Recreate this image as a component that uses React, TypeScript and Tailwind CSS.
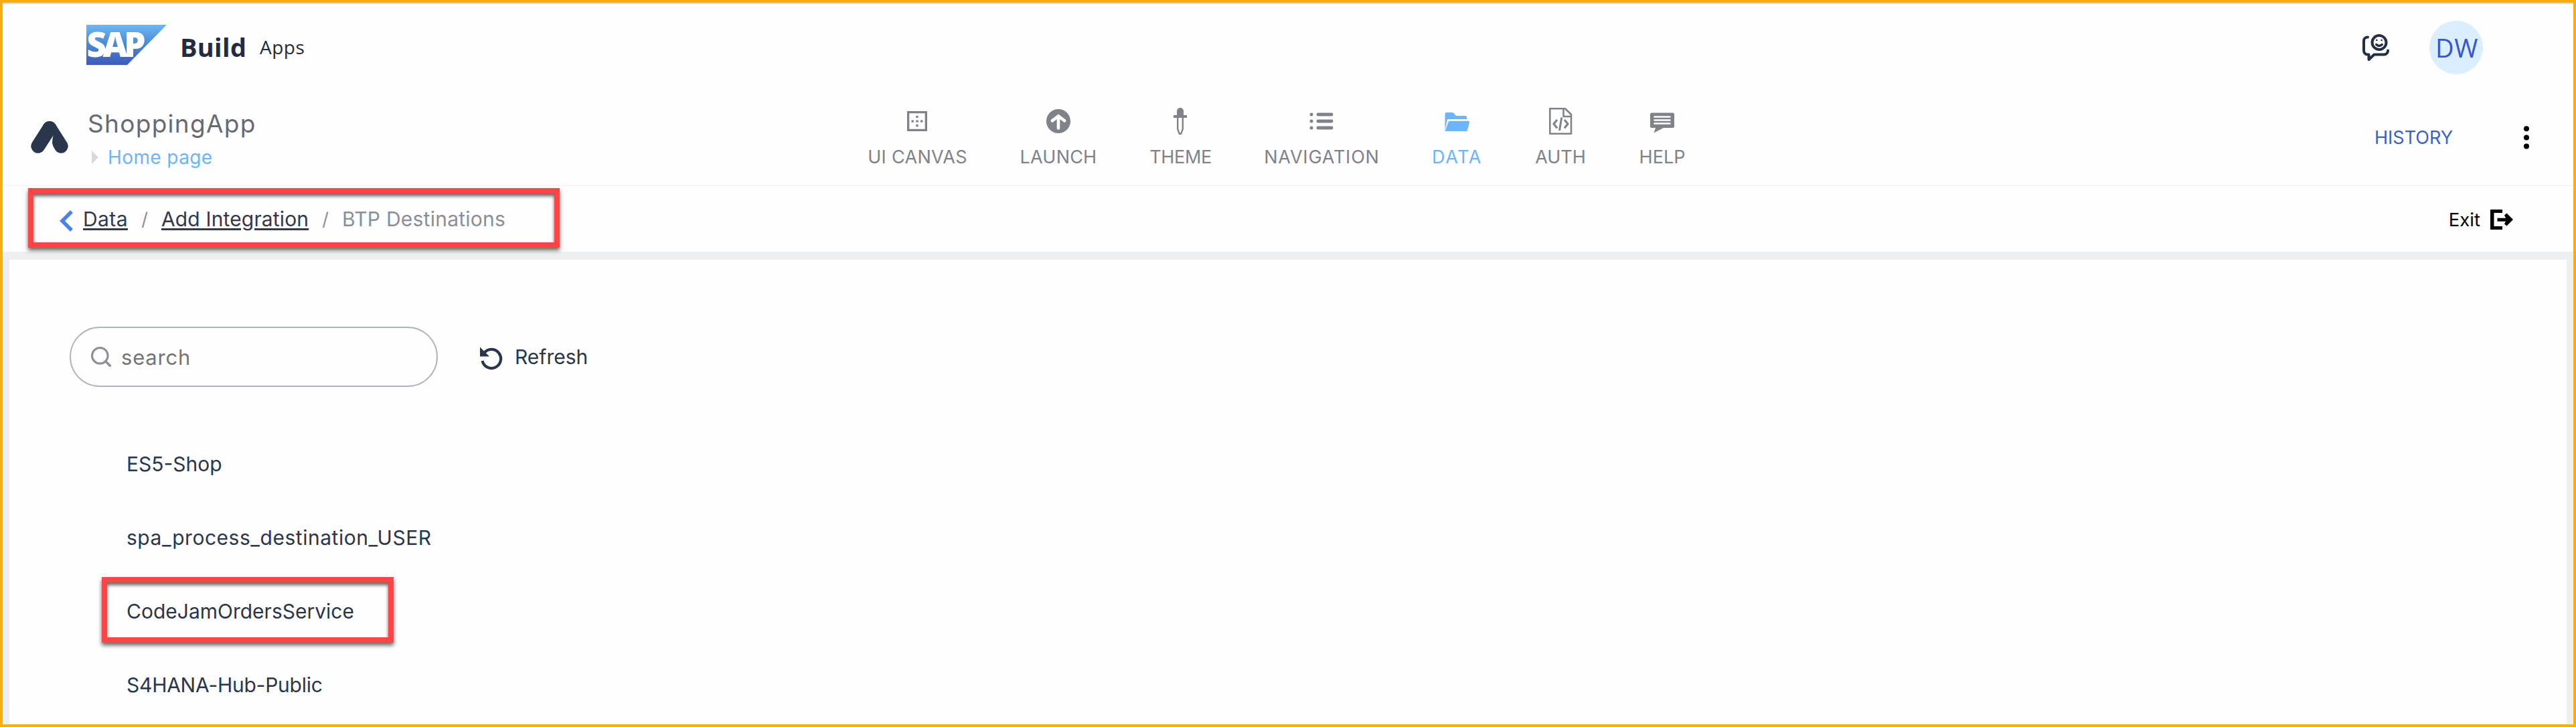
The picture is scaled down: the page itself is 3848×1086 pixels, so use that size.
import type { ReactNode } from "react";

function SapLogo() {
  return (
    <svg width="120" height="60" viewBox="0 0 120 60" className="shrink-0 overflow-visible">
      <defs>
        <linearGradient id="sapBlue" x1="0" y1="0" x2="0" y2="1">
          <stop offset="0" stopColor="#6cb8f1" />
          <stop offset="0.5" stopColor="#4a86d4" />
          <stop offset="1" stopColor="#3c5bbb" />
        </linearGradient>
      </defs>
      <path d="M0 0H120L61 60H0Z" fill="url(#sapBlue)" />
      <text x="0.5" y="48" textLength="88" lengthAdjust="spacing" fill="#fff" className="font-['Open_Sans',sans-serif] text-[51px] font-extrabold">
        SAP
      </text>
    </svg>
  );
}

function AppMark() {
  return (
    <svg width="56" height="48" viewBox="46 181 56 48" className="shrink-0">
      <path d="M74 191.5L91.2 218.3" stroke="#2a364b" strokeWidth="21" strokeLinecap="round" />
      <path d="M79.5 202Q78 208 78 214Q79 219 82.500 224L80 230H62L70 205Z" fill="#fefefe" />
      <path d="M74 191.5L56.800 218.300" stroke="#2a364b" strokeWidth="21" strokeLinecap="round" />
    </svg>
  );
}

function FeedbackIcon() {
  return (
    <svg width="40" height="40" viewBox="0 0 40 40" fill="none" stroke="#232f42" strokeWidth="4" strokeLinecap="round" strokeLinejoin="round">
      <path d="M8 4.500C4.500 4.500 2 6.500 2 10V24.500C2 28 4.500 30.500 8 30.500H9.500V38L17.500 30.500H32C35.500 30.500 38 28 38 24.500" />
      <circle cx="25" cy="12.500" r="10.500" />
      <path d="M20.800 15.500Q25 19.500 29.200 15.500" strokeWidth="3.400" />
      <circle cx="21.300" cy="9" r="1.300" fill="#232f42" stroke="none" />
      <circle cx="28.700" cy="9" r="1.300" fill="#232f42" stroke="none" />
    </svg>
  );
}

function CanvasIcon() {
  return (
    <svg width="40" height="40" viewBox="0 0 40 40" fill="#7f8289">
      <path fillRule="evenodd" d="M5 5H35V35H5ZM8.300 8.300V31.700H31.700V8.300Z" />
      <path d="M18.300 12h3.400v3h-3.400zM18.300 18.500h3.400v3.200h-3.400zM18.300 25h3.400v3.300h-3.400zM11.500 18.500h3.400v3.200h-3.400zM25 18.500h3.400v3.200H25z" />
    </svg>
  );
}

function LaunchIcon() {
  return (
    <svg width="40" height="40" viewBox="0 0 40 40" fill="none">
      <circle cx="20" cy="20" r="18" fill="#7f8289" />
      <path d="M20 30.500V13M10.800 19.300L20 12.300L29.200 19.300" stroke="#fff" strokeWidth="4.600" strokeLinecap="round" strokeLinejoin="miter" />
    </svg>
  );
}

function ThemeIcon() {
  return (
    <svg width="40" height="40" viewBox="0 0 40 40" fill="#7f8289">
      <path d="M15 11V5a5 5 0 0 1 10 0V11H30V15H10V11Z" />
      <path fillRule="evenodd" d="M15 14H25V32L22 40H18L15 32ZM17.400 15V31.500L19.500 37.500H20.500L22.600 31.500V15Z" />
    </svg>
  );
}

function NavigationIcon() {
  return (
    <svg width="40" height="40" viewBox="0 0 40 40" fill="#7f8289">
      {[10, 20, 30].map((y) => (
        <g key={y}>
          <circle cx="5" cy={y} r="2.500" />
          <rect x="12.500" y={y - 2.5} width="25" height="5" rx="2.400" />
        </g>
      ))}
    </svg>
  );
}

function DataIcon() {
  return (
    <svg width="40" height="40" viewBox="0 0 40 40" fill="#6cb4fd">
      <path d="M2.500 34.500V9.500Q2.500 7 5 7H13.500Q15 7 16 8.500L19 12H33Q35 12 35 14V17H7.500Q6 17 5.500 19Z" />
      <path d="M2.500 35L7.500 21.500Q8.200 19.700 10 19.700H37.500Q39.500 19.700 39 22L35.500 35Z" />
    </svg>
  );
}

function AuthIcon() {
  return (
    <svg width="40" height="40" viewBox="0 0 40 40" fill="none" stroke="#7f8289" strokeWidth="2.600" strokeLinejoin="round">
      <path d="M4.300 1.300H27L36 10V38.700H4.300Z" />
      <path d="M24.500 1.500V13H36" />
      <path d="M15 18L10 24L15 30.500M26 18L31 24L26 30.500M21.800 14.500L18.500 34" strokeWidth="3" strokeLinejoin="miter" />
    </svg>
  );
}

function HelpIcon() {
  return (
    <svg width="40" height="40" viewBox="0 0 40 40">
      <path d="M4.500 7.500H35.500Q38 7.500 38 10V27.500Q38 30 35.500 30H22L7.500 37.500L10 30H4.500Q2 30 2 27.500V10Q2 7.500 4.500 7.500Z" fill="#7f8289" />
      <path d="M8.500 13.500H31.500M8.500 18.500H31.500M8.500 23.500H31.500" stroke="#fff" strokeWidth="2.600" strokeLinecap="round" />
    </svg>
  );
}

const navItems: { label: string; icon: ReactNode; className: string }[] = [
  { label: "UI CANVAS", icon: <CanvasIcon />, className: "w-[228px] tracking-[0.3px] text-[#7f8289]" },
  { label: "LAUNCH", icon: <LaunchIcon />, className: "w-[193px] tracking-[0.2px] text-[#7f8289]" },
  { label: "THEME", icon: <ThemeIcon />, className: "w-[172px] tracking-[-0.35px] text-[#7f8289]" },
  { label: "NAVIGATION", icon: <NavigationIcon />, className: "w-[250px] tracking-[0.8px] text-[#7f8289]" },
  { label: "DATA", icon: <DataIcon />, className: "w-[154px] tracking-[1.6px] text-[#6cb4fd]" },
  { label: "AUTH", icon: <AuthIcon />, className: "w-[155px] text-[#7f8289]" },
  { label: "HELP", icon: <HelpIcon />, className: "w-[149px] text-[#7f8289]" },
];

const destinations = [
  { name: "ES5-Shop", className: "" },
  { name: "spa_process_destination_USER", className: "tracking-[0.53px]" },
  { name: "CodeJamOrdersService", className: "", highlighted: true },
  { name: "S4HANA-Hub-Public", className: "tracking-[-0.25px]" },
];

export default function App() {
  return (
    <div className="flex h-[1086px] w-[3848px] flex-col overflow-hidden border-4 border-[#fbad0a] bg-[#fefefe] font-['Inter',sans-serif] font-normal whitespace-nowrap">
      <header className="flex h-[132px] shrink-0 items-center border-t-2 border-[#d9d9de] pl-[125px] font-['Open_Sans',sans-serif]">
        <div className="-mt-2">
          <SapLogo />
        </div>
        <span className="-mt-0.5 ml-[20px] w-[119px] text-[38px] leading-none font-bold tracking-[0.3px] text-[#232c3f]">Build</span>
        <span className="-mt-0.5 text-[28px] leading-none tracking-[0.5px] text-[#232c3f]">Apps</span>
        <div className="mr-[135px] ml-auto flex items-center gap-[60px]">
          <FeedbackIcon />
          <div className="flex size-20 items-center justify-center rounded-full bg-[#dbeeff] pl-0.5 text-[38px] leading-none tracking-[0.6px] text-[#3557cf]">DW</div>
        </div>
      </header>

      <div className="flex h-[142px] shrink-0 border-b-2 border-[#f7f7f9]">
        <div className="flex w-[1252px] pl-[42px]">
          <div className="mt-[45px]">
            <AppMark />
          </div>
          <div className="mt-[29px] ml-[29px] flex flex-col gap-[10px]">
            <span className="text-[37px] leading-10 tracking-[1.300px] text-[#666a73]">ShoppingApp</span>
            <div className="flex items-center text-[28px] leading-10 tracking-[0.4px] text-[#6cb4fd]">
              <svg width="10" height="20" viewBox="0 0 10 20" className="mr-[14px] ml-[6px]">
                <path d="M0 0L10 10L0 20Z" fill="#d8d9dc" />
              </svg>
              Home page
            </div>
          </div>
        </div>
        <nav className="flex pt-[25px] text-[27px]">
          {navItems.map((item) => (
            <div key={item.label} className={"flex flex-col items-center gap-[14px] leading-10 " + item.className}>
              {item.icon}
              <span className="pl-px">{item.label}</span>
            </div>
          ))}
        </nav>
        <div className="mr-[66px] ml-auto flex h-[139px] items-center gap-[106px]">
          <span className="text-[27px] leading-none text-[#3b5fc9]">HISTORY</span>
          <svg width="8" height="35" viewBox="0 0 8 35">
            <circle cx="4" cy="4.200" r="4" />
            <circle cx="4" cy="17.400" r="4" />
            <circle cx="4" cy="30.600" r="4" />
          </svg>
        </div>
      </div>

      <div className="flex h-[98px] shrink-0 justify-between pt-[3px] pl-[38px] pr-[90px]">
        <div className="z-10 flex h-[89px] w-[794px] items-center border-8 border-[#fe4444] pt-[3px] pl-[39px] text-[30px] leading-none text-[#33384a] shadow-[0_4px_6px_rgba(0,0,0,0.6),inset_0_4px_5px_rgba(0,0,0,0.6)]">
          <svg width="20" height="32" viewBox="0 0 20 32" className="mt-1.5 mr-[15px]">
            <path d="M18 2L4 16L18 30" fill="none" stroke="#4d80ef" strokeWidth="5.500" />
          </svg>
          <a className="w-[67px] tracking-[0.4px] underline decoration-[3px] underline-offset-[3px]">Data</a>
          <span className="w-[50px] text-center text-[27px] text-[#8b8e97]">/</span>
          <a className="w-[220px] tracking-[0.15px] underline decoration-[3px] underline-offset-[3px]">Add Integration</a>
          <span className="w-[50px] text-center text-[27px] text-[#8b8e97]">/</span>
          <span className="tracking-[0.25px] text-[#8b8e97]">BTP Destinations</span>
        </div>
        <div className="flex h-[94px] items-center text-[27.5px] leading-none text-black">
          <span className="mr-[15px] pt-0.5">Exit</span>
          <svg width="34" height="30" viewBox="0 0 34 30">
            <path d="M0 0H18V5H5.500V25H18V30H0Z" />
            <path d="M10.500 12.800H23L21 8.500L24.500 5.500L34 15L24.500 24.500L21 21.500L23 17.800H10.500Z" />
          </svg>
        </div>
      </div>

      <main className="flex min-h-0 flex-1 flex-col border-x-[10px] border-t-12 border-[#eeeff1]">
        <div className="mt-[100px] ml-[90px] flex items-center text-[30px] leading-none">
          <div className="flex h-[90px] w-[550px] items-center rounded-full border-2 border-[#b0b3c0] pl-[30px] text-[#757575]">
            <svg width="30" height="30" viewBox="0 0 30 30" fill="none" stroke="#8b8e97" className="mr-[15px]">
              <circle cx="13.300" cy="13.300" r="11.800" strokeWidth="3" />
              <path d="M22 22L28.500 28.500" strokeWidth="3.400" strokeLinecap="round" />
            </svg>
            <span className="text-[31px] tracking-[0.8px]">search</span>
          </div>
          <svg width="36" height="36" viewBox="0 0 36 36" fill="none" className="mt-1 mr-[17px] ml-[62px]">
            <path d="M7 10.500A14 14 0 1 1 4.500 22" stroke="#2a364b" strokeWidth="4.200" />
            <path d="M1 1.500V15.500H15Z" fill="#2a364b" />
          </svg>
          <span className="text-[#2a364b]">Refresh</span>
        </div>
        <ul className="mt-[60px] text-[30px] text-[#2a364b]">
          {destinations.map((d) => (
            <li key={d.name} className="relative flex h-[110px] items-center pl-[175px] leading-none">
              {d.highlighted && (
                <div className="absolute top-1 left-[138px] h-[98px] w-[436px] border-8 border-[#fe4444] shadow-[0_4px_6px_rgba(0,0,0,0.6),inset_0_4px_5px_rgba(0,0,0,0.6)]" />
              )}
              <span className={d.className}>{d.name}</span>
            </li>
          ))}
        </ul>
      </main>
    </div>
  );
}
